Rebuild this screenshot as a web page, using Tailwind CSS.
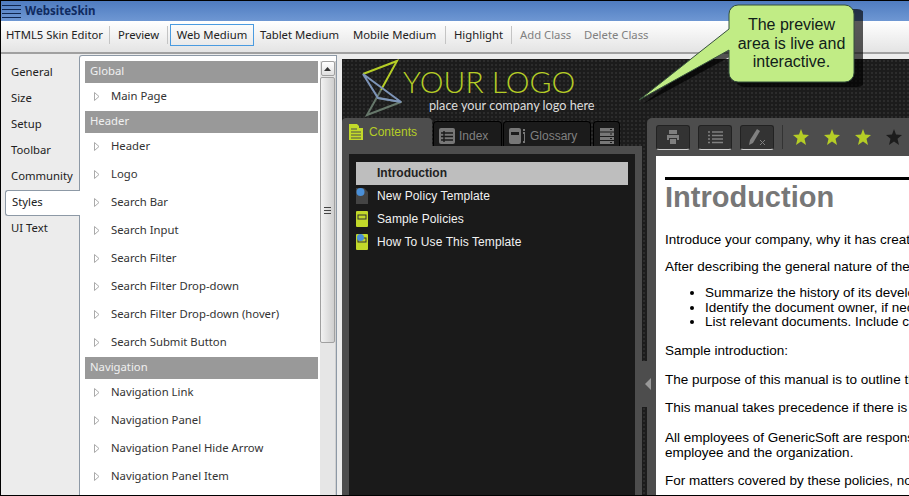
<!DOCTYPE html>
<html lang="en">
<head>
<meta charset="UTF-8">
<title>WebsiteSkin</title>
<script src="https://cdn.jsdelivr.net/npm/@tailwindcss/browser@4"></script>
</head>
<body class="bg-black overflow-hidden">
<div class="relative w-[909px] h-[496px] overflow-hidden border-t border-l border-b border-black flex flex-col bg-[#ececec] font-['Noto_Sans',sans-serif] text-[11.3px] text-[#222]">

  <!-- Title bar -->
  <div class="h-[20px] shrink-0 flex items-center pl-[1px] bg-gradient-to-b from-[#4f7cc0] to-[#6e97d3]">
    <svg width="20" height="14"><path d="M0 1.5h19M0 5.5h19M0 9.5h19M0 13.5h19" stroke="#10264f" stroke-width="1"/></svg>
    <span class="ml-[3px] font-bold text-[11.5px] text-[#0f2a60]">WebsiteSkin</span>
  </div>

  <!-- Toolbar -->
  <div class="h-[33px] shrink-0 flex items-center whitespace-nowrap bg-gradient-to-b from-white to-[#e4e4e4] border-b-2 border-[#a0a0a0] pb-[3px]">
    <span class="ml-[5px] w-[98px]">HTML5 Skin Editor</span>
    <span class="ml-[5px] w-px h-[18px] bg-[#c4c4c4]"></span>
    <span class="ml-[8px] w-[42px]">Preview</span>
    <span class="ml-[7px] w-px h-[18px] bg-[#c4c4c4]"></span>
    <span class="ml-[2px] w-[84px] h-[22px] flex items-center justify-center border border-[#4a9be0]">Web Medium</span>
    <span class="ml-[6px] w-[80px]">Tablet Medium</span>
    <span class="ml-[13px] w-[84px]">Mobile Medium</span>
    <span class="ml-[8px] w-px h-[18px] bg-[#c4c4c4]"></span>
    <span class="ml-[8px] w-[50px]">Highlight</span>
    <span class="ml-[7px] w-px h-[18px] bg-[#c4c4c4]"></span>
    <span class="ml-[8px] w-[52px] text-[#808080]">Add Class</span>
    <span class="ml-[12px] text-[#808080]">Delete Class</span>
  </div>

  <div class="flex-1 flex min-h-0">
    <!-- Side tabs -->
    <div class="w-[78px] shrink-0 pt-[6px] pl-[4px]">
      <div class="h-[26px] pl-[6px] pb-[2px] flex items-center">General</div>
      <div class="h-[26px] pl-[6px] pb-[2px] flex items-center">Size</div>
      <div class="h-[26px] pl-[6px] pb-[2px] flex items-center">Setup</div>
      <div class="h-[26px] pl-[6px] pb-[2px] flex items-center">Toolbar</div>
      <div class="h-[26px] pl-[6px] pb-[2px] flex items-center">Community</div>
      <div class="relative z-10 h-[26px] w-[75px] pl-[6px] pb-[2px] flex items-center bg-white border border-r-0 border-[#8d99a6] rounded-l-[3px]">Styles</div>
      <div class="h-[26px] pl-[6px] pb-[2px] flex items-center">UI Text</div>
    </div>

    <!-- Style list -->
    <div class="w-[258px] shrink-0 flex bg-white border-l border-t border-r border-[#8d99a6] rounded-tl-[3px] pt-[5px] pl-[5px] mt-[1px] overflow-hidden">
      <div class="w-[233px] shrink-0 text-[#333]">
        <div class="h-[22px] pl-[5px] pb-[1px] flex items-center bg-[#999] text-[#f0f0f0]">Global</div>
        <div class="h-[28px] pb-[2px] flex items-center"><svg width="6" height="9" class="ml-[9px] mr-[11px]"><path d="M.5.5L5 4.5L.5 8.5Z" fill="#fff" stroke="#aaa"/></svg>Main Page</div>
        <div class="h-[22px] pl-[5px] pb-[1px] flex items-center bg-[#999] text-[#f0f0f0]">Header</div>
        <div class="h-[28px] pb-[2px] flex items-center"><svg width="6" height="9" class="ml-[9px] mr-[11px]"><path d="M.5.5L5 4.5L.5 8.5Z" fill="#fff" stroke="#aaa"/></svg>Header</div>
        <div class="h-[28px] pb-[2px] flex items-center"><svg width="6" height="9" class="ml-[9px] mr-[11px]"><path d="M.5.5L5 4.5L.5 8.5Z" fill="#fff" stroke="#aaa"/></svg>Logo</div>
        <div class="h-[28px] pb-[2px] flex items-center"><svg width="6" height="9" class="ml-[9px] mr-[11px]"><path d="M.5.5L5 4.5L.5 8.5Z" fill="#fff" stroke="#aaa"/></svg>Search Bar</div>
        <div class="h-[28px] pb-[2px] flex items-center"><svg width="6" height="9" class="ml-[9px] mr-[11px]"><path d="M.5.5L5 4.5L.5 8.5Z" fill="#fff" stroke="#aaa"/></svg>Search Input</div>
        <div class="h-[28px] pb-[2px] flex items-center"><svg width="6" height="9" class="ml-[9px] mr-[11px]"><path d="M.5.5L5 4.5L.5 8.5Z" fill="#fff" stroke="#aaa"/></svg>Search Filter</div>
        <div class="h-[28px] pb-[2px] flex items-center"><svg width="6" height="9" class="ml-[9px] mr-[11px]"><path d="M.5.5L5 4.5L.5 8.5Z" fill="#fff" stroke="#aaa"/></svg>Search Filter Drop-down</div>
        <div class="h-[28px] pb-[2px] flex items-center"><svg width="6" height="9" class="ml-[9px] mr-[11px]"><path d="M.5.5L5 4.5L.5 8.5Z" fill="#fff" stroke="#aaa"/></svg>Search Filter Drop-down (hover)</div>
        <div class="h-[28px] pb-[2px] flex items-center"><svg width="6" height="9" class="ml-[9px] mr-[11px]"><path d="M.5.5L5 4.5L.5 8.5Z" fill="#fff" stroke="#aaa"/></svg>Search Submit Button</div>
        <div class="h-[22px] pl-[5px] pb-[1px] flex items-center bg-[#999] text-[#f0f0f0]">Navigation</div>
        <div class="h-[28px] pb-[2px] flex items-center"><svg width="6" height="9" class="ml-[9px] mr-[11px]"><path d="M.5.5L5 4.5L.5 8.5Z" fill="#fff" stroke="#aaa"/></svg>Navigation Link</div>
        <div class="h-[28px] pb-[2px] flex items-center"><svg width="6" height="9" class="ml-[9px] mr-[11px]"><path d="M.5.5L5 4.5L.5 8.5Z" fill="#fff" stroke="#aaa"/></svg>Navigation Panel</div>
        <div class="h-[28px] pb-[2px] flex items-center"><svg width="6" height="9" class="ml-[9px] mr-[11px]"><path d="M.5.5L5 4.5L.5 8.5Z" fill="#fff" stroke="#aaa"/></svg>Navigation Panel Hide Arrow</div>
        <div class="h-[28px] pb-[2px] flex items-center"><svg width="6" height="9" class="ml-[9px] mr-[11px]"><path d="M.5.5L5 4.5L.5 8.5Z" fill="#fff" stroke="#aaa"/></svg>Navigation Panel Item</div>
      </div>
      <!-- Scrollbar -->
      <div class="ml-[2px] w-[16px] shrink-0 bg-[#e6e6e6] flex flex-col items-center border-r border-[#d0d0d0]">
        <div class="w-[14px] h-[15px] flex items-center justify-center bg-gradient-to-b from-white to-[#e0e0e0] border border-[#a0a0a0] rounded-[2px]"><svg width="7" height="4"><path d="M0 4L3.5 0L7 4Z" fill="#333"/></svg></div>
        <div class="mt-[1px] w-[15px] h-[266px] flex items-center justify-center bg-gradient-to-r from-[#f2f2f2] to-[#cfcfcf] border border-[#a0a0a0] rounded-[2px]"><svg width="7" height="7"><path d="M0 .5h7M0 3.5h7M0 6.5h7" stroke="#444"/></svg></div>
      </div>
    </div>

    <!-- Live preview -->
    <div class="flex-1 min-w-0 flex flex-col mt-[5px] ml-[5px] bg-[#1c1c1c] bg-[radial-gradient(#2c2c2c_1px,transparent_1px)] bg-[size:4px_4px]">
      <!-- Logo -->
      <div class="h-[59px] shrink-0 flex">
        <svg width="60" height="59" class="shrink-0" fill="none" stroke-width="2">
          <path d="M21 15L55 2L39 31" stroke="#b5cd26"/>
          <path d="M39 31L25 56L59 43L36 39" stroke="#66776a"/>
          <path d="M21 15L59 43L36 39Z" stroke="#7d94b8"/>
        </svg>
        <div class="ml-[1px] pt-[5px]">
          <div class="font-['Lato',sans-serif] font-light text-[30px] leading-[34px] text-[#b5cd26]">YOUR LOGO</div>
          <div class="ml-[26px] mt-[1px] font-['Lato',sans-serif] text-[12.700px] leading-[13px] text-[#ddd]">place your company logo here</div>
        </div>
      </div>

      <div class="flex-1 min-h-0 flex">
        <!-- Left nav panel -->
        <div class="w-[300px] shrink-0 flex flex-col font-['Liberation_Sans',sans-serif] text-[12px]">
          <div class="h-[28px] shrink-0 flex items-end">
            <div class="w-[90px] h-[28px] flex items-center pl-[7px] bg-[#4d4d4d] rounded-t-[4px] text-[#b5cd26]">
              <svg width="14" height="16" class="mr-[6px]"><path d="M0 0h8l2 2v2h4v12H0Z" fill="#c2d92a"/><path d="M2 5h6M2 8h10M2 11h10M2 14h10" stroke="#4d4d4d"/></svg>Contents</div>
            <div class="ml-[1px] w-[69px] h-[25px] flex items-center pl-[5px] pt-[3px] bg-[#1b1b1b] border border-b-0 border-black rounded-t-[4px] text-[#808080]">
              <svg width="16" height="16" class="mr-[4px]"><rect width="16" height="16" rx="2" fill="#777"/><path d="M2 5h12M2 8.5h12M2 12h12M5 3v11" stroke="#1b1b1b" stroke-width="1.400"/></svg>Index</div>
            <div class="ml-[1px] w-[88px] h-[25px] flex items-center pl-[5px] pt-[3px] bg-[#1b1b1b] border border-b-0 border-black rounded-t-[4px] text-[#808080]">
              <svg width="16" height="16" class="mr-[5px]"><rect width="12" height="16" rx="2" fill="#777"/><rect x="2" y="4" width="8" height="3" fill="#1b1b1b"/><path d="M14 2h2M14 5h2v9h-2" stroke="#777" stroke-width="2" fill="none"/></svg>Glossary</div>
            <div class="ml-[2px] w-[27px] h-[25px] flex items-center pl-[5px] pt-[3px] bg-[#1b1b1b] border border-b-0 border-black rounded-t-[4px]">
              <svg width="16" height="16"><path d="M1 0h14v3.500H1ZM1 4.500h14V8H1ZM1 9h14v3H1ZM1 13h14v3H1Z" fill="#777"/><path d="M11 1.500h2M11 6h2M11 10.500h2M11 14.500h2" stroke="#1b1b1b"/></svg>
            </div>
          </div>
          <div class="flex-1 bg-[#4d4d4d] pt-[8px] px-[7px]">
            <div class="h-full bg-[#1a1a1a] pt-[8px] pl-[7px] pr-[7px] text-[#f2f2f2]">
              <div class="h-[23px] flex items-center pl-[21px] pb-[1px] bg-[#bebebe] font-bold text-[#222]">Introduction</div>
              <div class="h-[23px] flex items-center pb-[1px]">
                <svg width="12" height="16" class="mr-[9px]"><path d="M0 0h8l4 4v12H0Z" fill="#444"/><circle cx="4.500" cy="4" r="4" fill="#4a90d9"/></svg><span class="tracking-[.1px]">New Policy Template</span></div>
              <div class="h-[23px] flex items-center pb-[1px]">
                <svg width="12" height="16" class="mr-[9px]"><rect width="12" height="16" rx="1" fill="#c2d92a"/><rect x="2" y="4" width="8" height="4" fill="none" stroke="#333"/></svg><span class="tracking-[.1px]">Sample Policies</span></div>
              <div class="h-[23px] flex items-center pb-[1px]">
                <svg width="12" height="16" class="mr-[9px]"><rect width="12" height="16" rx="1" fill="#c2d92a"/><rect x="2" y="4" width="8" height="4" fill="none" stroke="#333"/><circle cx="4.500" cy="3.500" r="3.500" fill="#4a90d9"/></svg><span class="tracking-[.1px]">How To Use This Template</span></div>
            </div>
          </div>
        </div>

        <!-- Hide arrow -->
        <div class="w-[5px] shrink-0 relative">
          <div class="absolute left-0 top-[243px] w-[11px] h-[46px] flex items-center justify-center bg-[#4d4d4d] rounded-r-[3px] z-10"><svg width="6" height="12"><path d="M6 0V12L0 6Z" fill="#999"/></svg></div>
        </div>

        <!-- Topic panel -->
        <div class="flex-1 min-w-0 flex flex-col bg-[#4d4d4d] rounded-tl-[5px] pl-[9px] font-['Liberation_Sans',sans-serif]">
          <div class="h-[38px] shrink-0 flex items-center gap-[8px]">
            <div class="w-[34px] h-[25px] flex items-center justify-center bg-[#333] border border-[#222] border-b-[#ccc] rounded-[3px]">
              <svg width="14" height="14"><path d="M3 0h8v4H3ZM1 5h12v5h-2V8H3v2H1ZM4 9h6v5H4Z" fill="#808080"/></svg></div>
            <div class="w-[34px] h-[25px] flex items-center justify-center bg-[#333] border border-[#222] border-b-[#ccc] rounded-[3px]">
              <svg width="15" height="13"><path d="M0 1h2M4 1h11M0 4.500h2M4 4.500h11M0 8h2M4 8h11M0 11.500h2M4 11.500h11" stroke="#808080" stroke-width="1.500"/></svg></div>
            <div class="w-[34px] h-[25px] flex items-center justify-center bg-[#333] border border-[#222] border-b-[#ccc] rounded-[3px]">
              <svg width="18" height="17"><path d="M9 0L12 2L5 14L1 16L2 11Z" fill="#808080"/><path d="M12 11L17 16M17 11L12 16" stroke="#808080"/></svg></div>
            <div class="w-px h-[24px] bg-[#333]"></div>
            <div class="flex gap-[15px] ml-[2px]">
              <svg width="16" height="16"><path d="M8 0L10 5.500L16 6L11.500 9.800L13 16L8 12.500L3 16L4.500 9.800L0 6L6 5.500Z" fill="#b5cd26"/></svg>
              <svg width="16" height="16"><path d="M8 0L10 5.500L16 6L11.500 9.800L13 16L8 12.500L3 16L4.500 9.800L0 6L6 5.500Z" fill="#b5cd26"/></svg>
              <svg width="16" height="16"><path d="M8 0L10 5.500L16 6L11.500 9.800L13 16L8 12.500L3 16L4.500 9.800L0 6L6 5.500Z" fill="#b5cd26"/></svg>
              <svg width="16" height="16"><path d="M8 0L10 5.500L16 6L11.500 9.800L13 16L8 12.500L3 16L4.500 9.800L0 6L6 5.500Z" fill="#1c1c1c"/></svg>
            </div>
          </div>
          <div class="flex-1 min-h-0 bg-white pl-[9px] pt-[21px] overflow-hidden whitespace-nowrap text-[13.500px] leading-[14px] text-black">
            <div class="h-[3px] bg-black"></div>
            <h1 class="mt-[1px] font-bold text-[29px] leading-[33px] text-[#777]">Introduction</h1>
            <p class="mt-[19px]">Introduce your company, why it has created this manual and what it contains.</p>
            <p class="mt-[13px]">After describing the general nature of the company, include the following:</p>
            <ul class="mt-[12px] ml-[26px] list-disc pl-[14px] leading-[14.500px]">
              <li>Summarize the history of its development and policies</li>
              <li>Identify the document owner, if necessary</li>
              <li>List relevant documents. Include cross references</li>
            </ul>
            <p class="mt-[14px]">Sample introduction:</p>
            <p class="mt-[15px]">The purpose of this manual is to outline the policies of the company</p>
            <p class="mt-[14px]">This manual takes precedence if there is a conflict</p>
            <p class="mt-[15px] leading-[15px]">All employees of GenericSoft are responsible for reading this manual<br>employee and the organization.</p>
            <p class="mt-[14px]">For matters covered by these policies, notify your manager</p>
          </div>
        </div>
      </div>
    </div>
  </div>

  <!-- Callout -->
  <div class="absolute left-[636px] top-[3px] w-[226px] h-[104px] z-20">
    <svg width="226" height="104" class="absolute left-0 top-0">
      <path d="M103 1h113a9 9 0 0 1 9 9v60a9 9 0 0 1-9 9H103a9 9 0 0 1-9-9V46L2 96L94 25V10a9 9 0 0 1 9-9Z" transform="translate(4 4)" fill="#000" fill-opacity=".65"/>
      <path d="M101 1h107a9 9 0 0 1 9 9v59a9 9 0 0 1-9 9H101a9 9 0 0 1-9-9V46L2 96L92 25V10a9 9 0 0 1 9-9Z" fill="#c1ec85" stroke="#35503c"/>
    </svg>
    <div class="absolute left-[92px] top-[12px] w-[125px] text-center font-['Liberation_Sans',sans-serif] text-[16px] leading-[18.500px] text-[#10201a]">The preview<br>area is live and<br>interactive.</div>
  </div>
</div>
</body>
</html>
